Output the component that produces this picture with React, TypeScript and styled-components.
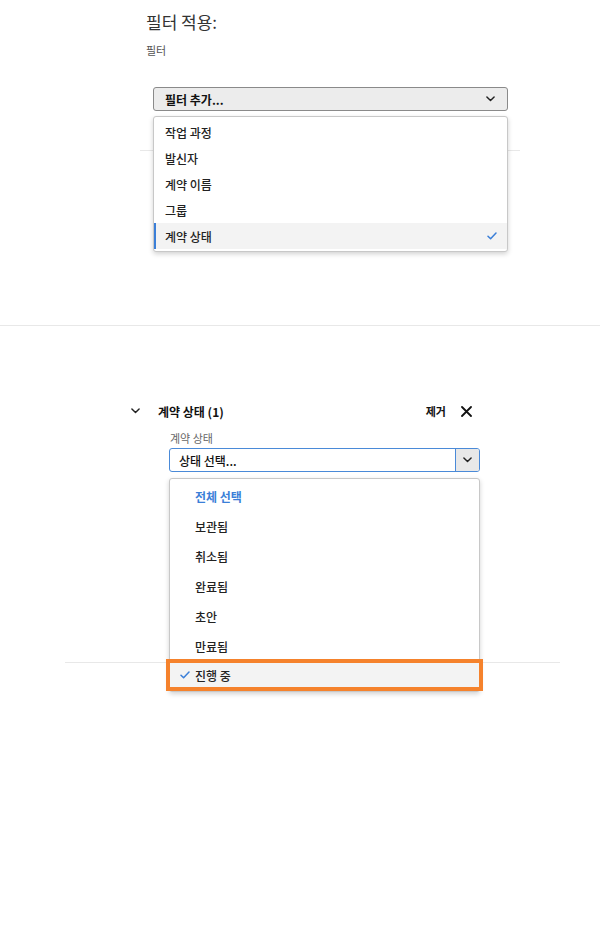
import React, {FC} from 'react';
import styled, {createGlobalStyle} from 'styled-components';

const GlobalStyle = createGlobalStyle`
  body {
    margin: 0;
    background: #fff;
    font-family: "Noto Sans CJK KR", "Noto Sans", sans-serif;
    color: #222;
  }
`;

const BLUE = '#3b7fd8';

const Page = styled.div`
  width: 600px;
  min-height: 930px;
`;

const TopSection = styled.section`
  height: 326px;
  border-bottom: 1px solid #e8e8e8;
  box-sizing: border-box;
`;

const TopInner = styled.div`
  margin-left: 140px;
  width: 380px;
  padding-top: 11px;
`;

const Title = styled.h2`
  margin: 0;
  padding-left: 6px;
  font-size: 17px;
  line-height: 22px;
  font-weight: 400;
  color: #333;
`;

const FieldLabel = styled.div<{$indent?: number}>`
  padding-left: ${p => p.$indent ?? 6}px;
  font-size: 11px;
  line-height: 14px;
  color: #555;
`;

const TopLabel = styled(FieldLabel)`
  margin-top: 10px;
`;

const SelectWrap = styled.div`
  position: relative;
  margin: 30px 12px 0 13px;
`;

const AddButton = styled.div`
  height: 24px;
  box-sizing: border-box;
  display: flex;
  align-items: center;
  justify-content: space-between;
  padding: 0 12px 0 11px;
  border: 1px solid #8a8a8a;
  border-radius: 3px;
  background: #ececec;
  font-size: 12px;
  font-weight: 700;
  color: #111;
`;

const Menu = styled.ul<{$top: number; $pad: number}>`
  position: absolute;
  top: ${p => p.$top}px;
  left: 0;
  right: 0;
  z-index: 2;
  margin: 0;
  padding: ${p => p.$pad}px 0;
  list-style: none;
  background: #fff;
  border: 1px solid #c8c8c8;
  border-radius: 3px;
  box-shadow: 0 2px 5px rgba(0, 0, 0, 0.18);
`;

const FilterItem = styled.li<{$selected?: boolean}>`
  height: 26px;
  display: flex;
  align-items: center;
  justify-content: space-between;
  padding: 0 10px 0 ${p => (p.$selected ? 9 : 11)}px;
  font-size: 12px;
  font-weight: 500;
  color: #222;
  background: ${p => (p.$selected ? '#f3f3f3' : 'transparent')};
  border-left: ${p => (p.$selected ? `2px solid ${BLUE}` : 'none')};
`;

const Divider = styled.div<{$top: number}>`
  margin-top: ${p => p.$top}px;
  border-top: 1px solid #e8e8e8;
`;

const BottomSection = styled.section`
  width: 495px;
  margin-left: 65px;
  padding-top: 75px;
`;

const HeaderRow = styled.div`
  height: 20px;
  display: flex;
  align-items: center;
  padding: 0 88px 0 66px;
`;

const HeaderTitle = styled.div`
  flex: 1;
  margin-left: 18px;
  font-size: 12px;
  font-weight: 700;
  color: #111;
`;

const RemoveText = styled.span`
  font-size: 11px;
  font-weight: 700;
  color: #111;
  margin-right: 15px;
`;

const Body = styled.div`
  padding-left: 104px;
  width: 311px;
`;

const BodyLabel = styled(FieldLabel)`
  margin-top: 10px;
  color: #666;
`;

const StatusSelect = styled.div`
  position: relative;
  margin-top: 3px;
`;

const StatusBox = styled.div`
  height: 24px;
  box-sizing: border-box;
  display: flex;
  border: 1px solid #4a8ad8;
  border-radius: 3px;
  font-size: 12px;
  font-weight: 500;
  color: #111;
`;

const StatusText = styled.div`
  flex: 1;
  display: flex;
  align-items: center;
  padding-left: 9px;
`;

const StatusToggle = styled.div`
  width: 23px;
  display: flex;
  align-items: center;
  justify-content: center;
  background: #e8e8e8;
  border-left: 1px solid #4a8ad8;
  border-radius: 0 2px 2px 0;
`;

const StatusItem = styled.li<{$variant?: 'all' | 'picked'}>`
  position: relative;
  height: ${p => (p.$variant === 'picked' ? 28 : 30)}px;
  display: flex;
  align-items: center;
  font-size: 12px;
  color: ${p => (p.$variant === 'all' ? BLUE : '#222')};
  font-weight: ${p => (p.$variant === 'all' ? 700 : 500)};
  background: ${p => (p.$variant === 'picked' ? '#f3f3f3' : 'transparent')};
  outline: ${p => (p.$variant === 'picked' ? '4px solid #f5822c' : 'none')};
  outline-offset: -2px;
  margin: 0 ${p => (p.$variant === 'picked' ? -2 : 0)}px;
  padding-left: ${p => (p.$variant === 'picked' ? 27 : 25)}px;
`;

const CheckSlot = styled.span`
  position: absolute;
  left: 12px;
  top: 50%;
  transform: translateY(-50%);
  display: flex;
`;

const Chevron: FC<{size?: number}> = ({size = 9}) => (
    <svg width={size} height={size * 0.6} viewBox="0 0 10 6">
        <polyline points="1,1 5,5 9,1" fill="none" stroke="#222" strokeWidth="1.6" strokeLinecap="round" strokeLinejoin="round"/>
    </svg>
);

const Check: FC = () => (
    <svg width="10" height="8" viewBox="0 0 10 8">
        <polyline points="1,4.2 3.6,6.8 9,1" fill="none" stroke={BLUE} strokeWidth="1.5" strokeLinecap="round" strokeLinejoin="round"/>
    </svg>
);

const Close: FC = () => (
    <svg width="11" height="11" viewBox="0 0 11 11">
        <path d="M1 1 L10 10 M10 1 L1 10" stroke="#111" strokeWidth="1.8" strokeLinecap="round"/>
    </svg>
);

const filterFields = ['작업 과정', '발신자', '계약 이름', '그룹', '계약 상태'];
const statuses = ['보관됨', '취소됨', '완료됨', '초안', '만료됨'];

const App: FC = () => {
    return (
        <Page>
            <GlobalStyle/>
            <TopSection>
                <TopInner>
                    <Title>필터 적용:</Title>
                    <TopLabel>필터</TopLabel>
                    <SelectWrap>
                        <AddButton>
                            <span>필터 추가...</span>
                            <Chevron/>
                        </AddButton>
                        <Menu $top={29} $pad={2}>
                            {filterFields.map(name => (
                                <FilterItem key={name} $selected={name === '계약 상태'}>
                                    <span>{name}</span>
                                    {name === '계약 상태' && <Check/>}
                                </FilterItem>
                            ))}
                        </Menu>
                    </SelectWrap>
                    <Divider $top={39}/>
                </TopInner>
            </TopSection>

            <BottomSection>
                <HeaderRow>
                    <Chevron/>
                    <HeaderTitle>계약 상태 (1)</HeaderTitle>
                    <RemoveText>제거</RemoveText>
                    <Close/>
                </HeaderRow>
                <Body>
                    <BodyLabel $indent={1}>계약 상태</BodyLabel>
                    <StatusSelect>
                        <StatusBox>
                            <StatusText>상태 선택...</StatusText>
                            <StatusToggle><Chevron/></StatusToggle>
                        </StatusBox>
                        <Menu $top={30} $pad={2}>
                            <StatusItem $variant="all">전체 선택</StatusItem>
                            {statuses.map(s => (
                                <StatusItem key={s}>{s}</StatusItem>
                            ))}
                            <StatusItem $variant="picked">
                                <CheckSlot><Check/></CheckSlot>
                                진행 중
                            </StatusItem>
                        </Menu>
                    </StatusSelect>
                </Body>
                <Divider $top={190}/>
            </BottomSection>
        </Page>
    );
};

export default App;
